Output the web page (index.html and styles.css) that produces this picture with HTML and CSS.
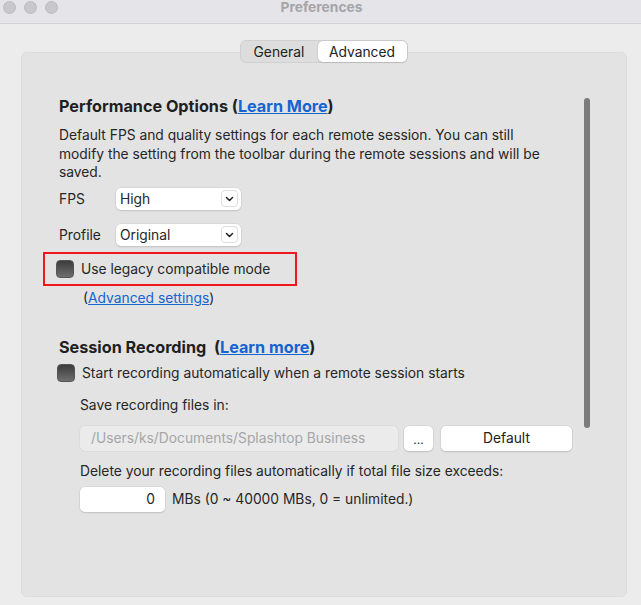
FILE: index.html
```html
<!DOCTYPE html>
<html>
<head>
<meta charset="utf-8">
<link rel="stylesheet" href="styles.css">
</head>
<body>
<div class="window">
  <div class="titlebar">
    <div class="lights"><span class="light"></span><span class="light"></span><span class="light"></span></div>
    <div class="title">Preferences</div>
  </div>
  <div class="tabs-wrap">
    <div class="tabs">
      <div class="tab">General</div>
      <div class="tab active">Advanced</div>
    </div>
  </div>
  <div class="panel">
    <div class="scrollbar"></div>
    <h2 class="heading h-perf">Performance Options (<a href="#">Learn More</a>)</h2>
    <p class="desc">Default FPS and quality settings for each remote session. You can still modify the setting from the toolbar during the remote sessions and will be saved.</p>
    <div class="field-row r-fps">
      <span class="label">FPS</span>
      <div class="select"><span>High</span><span class="chev"><svg width="9" height="6" viewBox="0 0 9 6"><path d="M1.5 1.5 L4.5 4.5 L7.5 1.5" fill="none" stroke="#222" stroke-width="1.5" stroke-linecap="round" stroke-linejoin="round"/></svg></span></div>
    </div>
    <div class="field-row r-profile">
      <span class="label">Profile</span>
      <div class="select"><span>Original</span><span class="chev"><svg width="9" height="6" viewBox="0 0 9 6"><path d="M1.5 1.5 L4.5 4.5 L7.5 1.5" fill="none" stroke="#222" stroke-width="1.5" stroke-linecap="round" stroke-linejoin="round"/></svg></span></div>
    </div>
    <div class="highlight">
      <div class="check-row"><span class="checkbox"></span><span>Use legacy compatible mode</span></div>
    </div>
    <div class="adv">(<a href="#">Advanced settings</a>)</div>

    <h2 class="heading h-rec">Session Recording&nbsp; (<a href="#">Learn more</a>)</h2>
    <div class="check-row r-start"><span class="checkbox"></span><span>Start recording automatically when a remote session starts</span></div>
    <div class="indent">
      <div class="save-label">Save recording files in:</div>
      <div class="path-row">
        <div class="path">/Users/ks/Documents/Splashtop Business</div>
        <div class="btn dots">...</div>
        <div class="btn def">Default</div>
      </div>
      <div class="del-label">Delete your recording files automatically if total file size exceeds:</div>
      <div class="size-row">
        <div class="num">0</div>
        <span>MBs (0 ~ 40000 MBs, 0 = unlimited.)</span>
      </div>
    </div>
  </div>
</div>
</body>
</html>
```
FILE: styles.css
```css
* { box-sizing: border-box; }
html, body { margin: 0; padding: 0; }
body {
  width: 641px;
  height: 605px;
  overflow: hidden;
  background: #ececec;
  font-family: "Inter", "Liberation Sans", sans-serif;
  font-size: 13.8px;
  color: #262626;
}
.window { width: 641px; height: 605px; display: flex; flex-direction: column; }
.titlebar {
  height: 24px;
  background: #e5e4e8;
  border-bottom: 1px solid #d2d2d4;
  position: relative;
  display: flex;
  align-items: center;
  justify-content: center;
  flex-shrink: 0;
}
.lights { position: absolute; left: 3px; top: 1px; display: flex; gap: 8px; }
.light {
  width: 13px; height: 13px; border-radius: 50%;
  background: #c8c7cb; border: 1px solid #bcbbbf;
}
.title { font-weight: 700; font-size: 13.8px; color: #a5a4a8; margin-top: -9px; margin-left: 2px; }
.tabs-wrap { display: flex; justify-content: center; margin-top: 16px; padding-left: 6px; position: relative; z-index: 2; }
.tabs {
  display: flex;
  background: #dddddd;
  border: 1px solid #d0d0d0;
  border-radius: 6px;
  height: 23px;
  padding: 0;
}
.tab {
  width: 77px;
  display: flex; align-items: center; justify-content: center;
  color: #222;
}
.tab.active {
  width: 89px;
  background: #fff;
  border-radius: 5px;
  box-shadow: 0 0 0 0.5px #c4c4c4, 0 1px 1px rgba(0,0,0,0.15);
}
.panel {
  position: relative;
  margin: -11px 14px 8px 21px;
  flex: 1;
  background: #e3e3e3;
  border: 1px solid #dcdcdc;
  border-radius: 6px;
  padding: 43px 0 0 37px;
}
.scrollbar {
  position: absolute;
  left: 562px; top: 45px;
  width: 6px; height: 330px;
  background: #7b7b7b;
  border-radius: 3px;
}
.heading {
  margin: 0;
  font-size: 16.2px;
  font-weight: 700;
  color: #1f1f1f;
  line-height: 20px;
}
a { color: #1464d2; text-decoration: underline; }
.desc {
  margin: 10px 0 0 0;
  width: 485px;
  line-height: 18.5px;
}
.field-row { display: flex; align-items: center; height: 22px; }
.r-fps { margin-top: 6px; }
.r-profile { margin-top: 14px; }
.label { width: 57px; }
.select {
  width: 125px; height: 22px;
  background: #fff;
  border-radius: 5px;
  box-shadow: 0 0 0 0.5px #cfcfcf, 0 1px 1.5px rgba(0,0,0,0.18);
  display: flex; align-items: center; justify-content: space-between;
  padding: 0 3px 0 4px;
}
.chev {
  width: 17px; height: 17px;
  border-radius: 4px;
  border: 1px solid #dedede;
  display: flex; align-items: center; justify-content: center;
  background: #fff;
}
.highlight {
  margin: 6px 0 0 -16px;
  width: 254px;
  height: 34px;
  border: 2px solid #f0161b;
  display: flex; align-items: center;
  padding-left: 13px;
}
.check-row { display: flex; align-items: center; gap: 7px; }
.checkbox {
  width: 18px; height: 18px;
  border-radius: 4px;
  background: linear-gradient(#3c3c3c, #6e6e6e);
  border: 1px solid #555;
  flex-shrink: 0;
  margin-left: -2px;
}
.adv { margin: 3px 0 0 24px; line-height: 18px; }
.h-rec { margin-top: 30px; }
.r-start { margin-top: 7px; }
.indent { padding-left: 21px; }
.save-label { margin-top: 14px; line-height: 18px; }
.path-row { display: flex; align-items: center; margin-top: 12px; height: 25px; }
.path {
  width: 318px; height: 25px;
  background: #ebebeb;
  border-radius: 5px;
  box-shadow: 0 0 0 0.5px #d4d4d4;
  color: #a6a6a6;
  display: flex; align-items: center;
  padding-left: 11px;
}
.btn {
  height: 25px;
  background: #fff;
  border-radius: 5px;
  box-shadow: 0 0 0 0.5px #cdcdcd, 0 1px 1.5px rgba(0,0,0,0.18);
  display: flex; align-items: center; justify-content: center;
  color: #222;
}
.dots { width: 29px; margin-left: 6px; font-size: 12px; padding-top: 3px; }
.def { width: 131px; margin-left: 8px; }
.del-label { margin-top: 10px; line-height: 20px; }
.size-row { display: flex; align-items: center; margin-top: 6px; gap: 7px; height: 25px; }
.num {
  width: 85px; height: 25px;
  background: #fff;
  border-radius: 5px;
  box-shadow: 0 0 0 0.5px #cdcdcd, 0 1px 1.5px rgba(0,0,0,0.18);
  display: flex; align-items: center; justify-content: flex-end;
  padding-right: 10px;
}
```
